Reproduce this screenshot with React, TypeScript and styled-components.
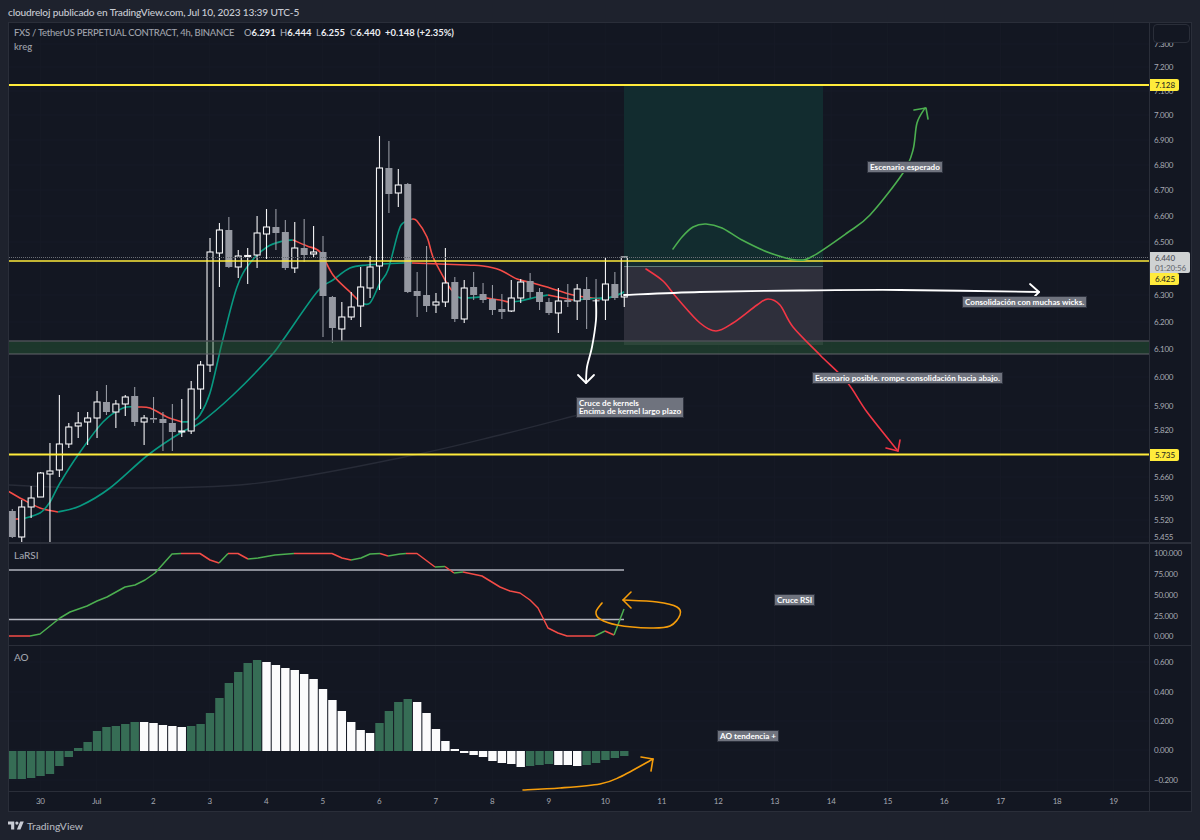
import React from "react";
import styled, { createGlobalStyle } from "styled-components";

const FONT = `"Lato", "Noto Sans", "Liberation Sans", sans-serif`;
const BG = "#131722";

const Global = createGlobalStyle`
  html, body { margin: 0; padding: 0; background: #1e222d; }
  body { font-family: ${FONT}; }
`;

const Page = styled.div`
  width: 1200px;
  height: 840px;
  display: flex;
  flex-direction: column;
  background: #1e222d;
  overflow: hidden;
`;
const Header = styled.header`
  height: 22px;
  flex: none;
  display: flex;
  align-items: center;
  padding: 2px 8px 0;
  box-sizing: border-box;
  font-size: 10.1px;
  font-weight: 500;
  letter-spacing: -0.15px;
  color: #c9ccd4;
  white-space: nowrap;
`;
const Frame = styled.main`
  flex: none;
  margin: 0 8px;
  height: 790px;
  box-sizing: border-box;
  border: 1px solid #2a2e39;
  background: ${BG};
  display: flex;
  flex-direction: column;
`;
const Pane = styled.section<{ $h: number; $sep?: number }>`
  flex: none;
  height: ${(p) => p.$h}px;
  box-sizing: border-box;
  border-bottom: ${(p) => p.$sep ?? 0}px solid #2a2e39;
  display: grid;
  grid-template-columns: 1140px 42px;
`;
const Plot = styled.div`
  position: relative;
  overflow: hidden;
  height: 100%;
`;
const Axis = styled.div`
  position: relative;
  overflow: hidden;
  height: 100%;
  border-left: 1px solid #2a2e39;
  box-sizing: border-box;
`;
const Drawing = styled.svg`
  display: block;
  width: 100%;
  height: 100%;
`;
const AxisText = styled.text`
  font-family: ${FONT};
  font-size: 8px;
  fill: #a6a9b2;
  letter-spacing: -0.25px;
  dominant-baseline: central;
`;
const TimeText = styled(AxisText)`
  text-anchor: middle;
`;
const Legend = styled.div`
  position: absolute;
  left: 5px;
  top: 3px;
  color: #a0a3ac;
  font-size: 9.45px;
  font-weight: 500;
  line-height: 14px;
  white-space: nowrap;
`;
const LegendRow = styled.div`
  display: flex;
  align-items: center;
`;
const Title = styled.span`
  width: 230px;
  letter-spacing: -0.25px;
`;
const Quote = styled.span<{ $w: number }>`
  width: ${(p) => p.$w}px;
  b { color: #eceef2; font-weight: 700; }
`;
const Change = styled.span`
  color: #eceef2;
  font-weight: 700;
`;
const PaneTitle = styled.div`
  position: absolute;
  left: 5px;
  top: 4px;
  color: #a0a3ac;
  font-size: 10px;
  font-weight: 500;
  line-height: 14px;
`;
const Note = styled.div<{ $x: number; $y: number }>`
  position: absolute;
  left: ${(p) => p.$x}px;
  top: ${(p) => p.$y}px;
  background: #6f737e;
  border: 1px solid #2e323e;
  box-sizing: border-box;
  color: #fff;
  font-size: 8.1px;
  font-weight: 700;
  line-height: 8.4px;
  padding: 1px 2px;
  white-space: pre;
`;
const PriceTag = styled.div<{ $y: number; $h?: number; $w?: number; $grey?: boolean }>`
  position: absolute;
  left: 0;
  top: ${(p) => p.$y}px;
  width: ${(p) => p.$w ?? 29}px;
  height: ${(p) => p.$h ?? 12}px;
  background: ${(p) => (p.$grey ? "#cfd2d3" : "#ffeb3b")};
  color: ${(p) => (p.$grey ? "#4d5059" : "#2a2c22")};
  font-size: 8px;
  font-weight: 500;
  letter-spacing: -0.1px;
  line-height: 10px;
  padding: 1px 0 0 5px;
  box-sizing: border-box;
  border-radius: 0 2px 2px 0;
  small { display: block; font-size: 8px; color: #6a6d75; }
`;
const ScaleButton = styled.div`
  position: absolute;
  left: 3px;
  top: 1px;
  width: 37px;
  height: 19px;
  border: 1px solid #2a2e39;
  border-radius: 4px;
  background: ${BG};
  box-sizing: border-box;
`;
const Footer = styled.footer`
  flex: none;
  height: 28px;
  display: flex;
  align-items: center;
  gap: 3px;
  padding: 0 8px 1px;
  box-sizing: border-box;
  color: #b2b5be;
  font-size: 10.3px;
  font-weight: 500;
`;

type C = [number, number, number, number, number];
const candles: C[] = [
  [509, 538, 511, 537, 0], [500, 543, 507, 537, 1], [486, 518, 498, 507, 1], [472, 497, 473, 497, 1],
  [443, 545, 471, 474, 1], [395, 477, 444, 470, 1], [423, 448, 427, 444, 1], [412, 438, 423, 426, 1],
  [412, 445, 418, 422, 1], [391, 438, 402, 418, 1], [385, 415, 402, 412, 0], [400, 428, 404, 412, 1],
  [395, 416, 397, 404, 1], [387, 426, 396, 422, 0], [415, 445, 418, 422, 1], [397, 423, 418, 419.5, 0],
  [412, 451, 419, 423, 0], [404, 451, 423, 432, 0], [399, 437, 431, 431.5, 1], [381, 434, 389, 431, 1],
  [361, 409, 365, 389, 1], [238, 372, 252, 365, 1], [223, 287, 230, 253, 1], [217, 268, 230, 267, 0],
  [250, 278, 256, 267, 1], [248, 284, 255.5, 256, 1], [216, 268, 233, 255, 1], [209, 259, 227, 234, 1],
  [209, 250, 227, 233, 0], [220, 270, 232, 268, 0], [222, 273, 248, 268, 1], [219, 262, 248, 255, 0],
  [226, 257, 252, 254, 1], [236, 337, 252, 296, 0], [296, 343, 297, 328, 0], [302, 341, 317, 329, 1],
  [292, 320, 307, 317, 1], [267, 327, 287, 306, 1], [256, 298, 267, 288, 1], [136, 290, 168, 266, 1],
  [141, 213, 168, 194, 0], [169, 207, 185, 193, 1], [183, 293, 184, 292, 0], [272, 317, 291, 296, 0],
  [246, 312, 295, 306, 0], [293, 313, 302, 305, 1], [248, 307, 283, 302, 1], [277, 322, 282, 319, 0],
  [280, 323, 288, 319, 1], [272, 300, 287, 295, 0], [283, 303, 294, 300, 0], [285, 315, 299, 310, 0],
  [294, 319, 309, 312, 0], [280, 312, 298, 311, 1], [279, 303, 282, 298, 1], [273, 298, 281, 292, 0],
  [288, 310, 292, 302, 0], [298, 315, 302, 313, 0], [288, 333, 301, 313, 1], [284, 307, 300, 302, 0],
  [284, 320, 289, 301, 1], [277, 329, 289, 300, 0], [279, 320, 300, 301.5, 0], [257, 320, 284, 300, 1],
  [272, 300, 284, 298, 0], [257, 307, 257, 297, 1],
];
const cx = (i: number) => 12.3 + 9.415 * i;

type P = [number, number];
const smooth = (pts: P[]) => {
  let d = `M${pts[0][0]} ${pts[0][1]}`;
  for (let i = 0; i < pts.length - 1; i++) {
    const a = pts[i - 1] ?? pts[i], b = pts[i], c = pts[i + 1], e = pts[i + 2] ?? c;
    d += `C${(b[0] + (c[0] - a[0]) / 6).toFixed(1)} ${(b[1] + (c[1] - a[1]) / 6).toFixed(1)} ${(c[0] - (e[0] - b[0]) / 6).toFixed(1)} ${(c[1] - (e[1] - b[1]) / 6).toFixed(1)} ${c[0]} ${c[1]}`;
  }
  return d;
};
const line = (pts: P[]) => pts.map((p) => p.join(",")).join(" ");

const TEAL = "#089981";
const RED = "#f44c47";
const GRN = "#4caf50";
const slow: [string, P[]][] = [
  [RED, [[8, 491], [22, 499], [40, 508], [58, 512]]],
  [TEAL, [[58, 512], [80, 506], [110, 488], [148, 455], [182, 432], [200, 423], [233, 395], [270, 357], [283, 340], [317, 292], [333, 280], [350, 268], [367, 265], [403, 263], [412, 263]]],
  [RED, [[412, 263], [467, 265], [483, 266], [500, 270], [517, 279], [533, 283], [550, 288], [573, 295], [600, 299]]],
  [TEAL, [[600, 299], [612, 297], [624, 292]]],
];
const fast: [string, P[]][] = [
  [RED, [[14, 519], [22, 519]]],
  [TEAL, [[22, 519], [40, 513], [50, 502], [60, 483], [78, 455], [103, 422], [123, 408], [137, 407]]],
  [RED, [[137, 407], [150, 408], [167, 417], [182, 422]]],
  [TEAL, [[182, 422], [192, 421], [200, 415], [210, 393], [222, 343], [237, 287], [250, 263], [267, 247], [283, 241], [293, 240]]],
  [RED, [[293, 240], [307, 246], [320, 252], [333, 275], [350, 292], [361, 303]]],
  [TEAL, [[361, 303], [370, 303], [380, 283], [388, 270], [398, 233], [403, 223], [412, 219]]],
  [RED, [[412, 219], [417, 221], [427, 237], [433, 257], [445, 280], [450, 288], [458, 297]]],
  [TEAL, [[458, 297], [463, 298], [480, 297]]],
  [RED, [[480, 297], [500, 300], [508, 302]]],
  [TEAL, [[508, 302], [520, 301], [537, 297], [548, 295]]],
  [RED, [[548, 295], [573, 300]]],
  [TEAL, [[573, 300], [600, 298], [612, 297], [624, 292]]],
];
const rsi: [string, P[]][] = [
  [RED, [[9, 636], [30, 636]]],
  [GRN, [[30, 636], [40, 634], [60, 618], [70, 612], [87, 606], [97, 601], [107, 597], [125, 587], [135, 585], [145, 580], [155, 573], [172, 554], [181, 553.5]]],
  [RED, [[181, 553.5], [200, 553.5], [210, 560], [219, 563]]],
  [GRN, [[219, 563], [228, 553.5]]],
  [RED, [[228, 553.5], [238, 553.5], [248, 559]]],
  [GRN, [[248, 559], [258, 558], [275, 555], [294, 553.5]]],
  [RED, [[294, 553.5], [332, 553.5], [342, 558], [351, 560]]],
  [GRN, [[351, 560], [361, 558], [370, 554], [380, 553.5]]],
  [RED, [[380, 553.5], [388, 556]]],
  [GRN, [[388, 556], [400, 554], [406, 553.5]]],
  [RED, [[406, 553.5], [417, 553.5], [435, 567]]],
  [GRN, [[435, 567], [445, 566.5]]],
  [RED, [[445, 566.5], [454, 573]]],
  [GRN, [[454, 573], [463, 572]]],
  [RED, [[463, 572], [482, 576], [500, 587], [510, 591], [520, 593], [530, 600], [538, 608], [548, 628], [558, 633], [567, 636], [595, 636]]],
  [GRN, [[595, 636], [605, 631]]],
  [RED, [[605, 631], [614, 635]]],
  [GRN, [[614, 635], [624, 609]]],
];

const ao = [779, 779, 778, 776, 774, 766, 757, 748, 742, 731, 727, 726, 724, 722, 722, 723, 725, 726, 727, 726, 724, 713, 698, 683, 672, 663, 660, 662, 665, 668, 670, 674, 679, 689, 700, 711, 722, 730, 733, 723, 711, 702, 699, 702, 713, 729, 741, 749, 753, 755, 757, 761, 763, 764, 767, 766, 765, 764, 765, 765, 766, 765, 763, 760, 758, 756];
const isWhite = (i: number) => (i >= 14 && i <= 18) || (i >= 27 && i <= 38) || (i >= 43 && i <= 54) || (i >= 58 && i <= 60);

const priceTicks: [string, number][] = [["7.300", 44], ["7.200", 67], ["7.100", 91], ["7.000", 115], ["6.900", 140], ["6.800", 165], ["6.700", 190], ["6.600", 216], ["6.500", 242], ["6.300", 295], ["6.200", 322], ["6.100", 349], ["6.000", 377], ["5.900", 406], ["5.820", 430], ["5.660", 477], ["5.590", 498], ["5.520", 520], ["5.455", 537]];
const rsiTicks: [string, number][] = [["100.000", 553], ["75.000", 574], ["50.000", 595], ["25.000", 616], ["0.000", 636]];
const aoTicks: [string, number][] = [["0.600", 662], ["0.400", 692], ["0.200", 721], ["0.000", 750], ["−0.200", 780]];
const days = ["30", "Jul", "2", "3", "4", "5", "6", "7", "8", "9", "10", "11", "12", "13", "14", "15", "16", "17", "18", "19"];
const dayX = (i: number) => 40.3 + 56.49 * i;

const Segs = ({ segs, w }: { segs: [string, P[]][]; w: number }) => (
  <>
    {segs.map(([c, pts], i) => (
      <path key={i} d={smooth(pts)} fill="none" stroke={c} strokeWidth={w} strokeLinejoin="round" />
    ))}
  </>
);
const Hand = ({ pts, head, c, w = 1.6 }: { pts: P[]; head: P[]; c: string; w?: number }) => (
  <g fill="none" stroke={c} strokeWidth={w} strokeLinecap="round" strokeLinejoin="round">
    <path d={smooth(pts)} />
    <polyline points={line(head)} />
  </g>
);
const Ticks = ({ items, y, h }: { items: [string, number][]; y: number; h: number }) => (
  <Drawing viewBox={`1150 ${y} 41 ${h}`}>
    {items.map(([t, v]) => (
      <AxisText key={t} x={1154} y={v}>{t}</AxisText>
    ))}
  </Drawing>
);
const VGrid = ({ y1, y2 }: { y1: number; y2: number }) => (
  <g stroke="#171b26" strokeWidth="1">
    {days.map((_, i) => (
      <line key={i} x1={dayX(i)} x2={dayX(i)} y1={y1} y2={y2} />
    ))}
  </g>
);
const HGrid = ({ ys }: { ys: number[] }) => (
  <g stroke="#171b26" strokeWidth="1">
    {ys.map((y) => (
      <line key={y} x1={9} x2={1149} y1={y} y2={y} />
    ))}
  </g>
);

const GOLD = "#ffeb3b";
const ORANGE = "#f59d0b";

export default function App() {
  return (
    <Page>
      <Global />
      <Header>cloudreloj publicado en TradingView.com, Jul 10, 2023 13:39 UTC-5</Header>
      <Frame>
        <Pane $h={521} $sep={2}>
          <Plot>
            <Drawing viewBox="9 23 1140 519">
              <VGrid y1={23} y2={542} />
              <HGrid ys={priceTicks.map((t) => t[1])} />
              <rect x={624} y={86} width={199} height={180} fill="#122c2f" />
              <rect x={624} y={266} width={199} height={79} fill="#2e2f3b" />
              <line x1={624} x2={823} y1={266.5} y2={266.5} stroke="#5f7a77" />
              <path d={smooth([[8, 485], [100, 488], [250, 484], [400, 458], [500, 435], [578, 415]])} fill="none" stroke="#272b37" strokeWidth="1.4" />
              <Segs segs={slow} w={1.6} />
              <Segs segs={fast} w={1.6} />
              {candles.map(([wt, wb, bt, bb, up], i) => {
                const x = cx(i);
                const col = up ? "#f4f4f6" : "#9598a1";
                return (
                  <g key={i}>
                    <line x1={x} x2={x} y1={wt} y2={bt} stroke={col} strokeWidth="1.1" />
                    <line x1={x} x2={x} y1={bb} y2={wb} stroke={col} strokeWidth="1.1" />
                    {up ? (
                      <rect x={x - 3} y={bt} width={6} height={Math.max(bb - bt, 1)} fill={i === 65 ? "none" : BG} stroke={col} strokeWidth="1.1" />
                    ) : (
                      <rect x={x - 3.5} y={bt} width={7} height={Math.max(bb - bt, 1.5)} fill={col} />
                    )}
                  </g>
                );
              })}
              <rect x={9} y={341} width={1140} height={13} fill="#2e6b3a" opacity="0.38" />
              <line x1={9} x2={1149} y1={341} y2={341} stroke="#4b4f56" strokeWidth="1.6" />
              <line x1={9} x2={1149} y1={354} y2={354} stroke="#62656b" strokeWidth="1" />
              <line x1={9} x2={1149} y1={257.5} y2={257.5} stroke="#6a6d75" strokeWidth="1" strokeDasharray="1 1" />
              <line x1={9} x2={1149} y1={85} y2={85} stroke={GOLD} strokeWidth="2" />
              <line x1={9} x2={1149} y1={261} y2={261} stroke={GOLD} strokeWidth="1.6" />
              <line x1={9} x2={1149} y1={454.5} y2={454.5} stroke={GOLD} strokeWidth="2" />
              <Hand
                c="#4caf50"
                pts={[[673, 249], [682, 237], [693, 227], [706, 224], [722, 228], [742, 240], [770, 253], [797, 260], [813, 256], [847, 233], [870, 215], [903, 173], [913, 150], [917, 123], [925, 108]]}
                head={[[914, 110], [926, 108], [928, 119]]}
              />
              <Hand
                c="#f23645"
                pts={[[646, 269], [663, 281], [677, 298], [700, 323], [716, 331], [733, 323], [757, 305], [768, 299], [780, 305], [793, 327], [820, 355], [847, 382], [867, 412], [898, 451]]}
                head={[[886, 448], [898, 451], [900, 440]]}
              />
              <Hand
                c="#ffffff"
                w={1.8}
                pts={[[624, 295], [700, 292], [800, 290.5], [900, 290], [1039, 292]]}
                head={[[1030, 284], [1039, 292], [1035, 296]]}
              />
              <Hand
                c="#ffffff"
                w={1.8}
                pts={[[596, 300], [596, 320], [592, 347], [587, 367], [586, 383]]}
                head={[[578, 375], [586, 383], [594, 375]]}
              />
            </Drawing>
            <Legend>
              <LegendRow>
                <Title>FXS / TetherUS PERPETUAL CONTRACT, 4h, BINANCE</Title>
                <Quote $w={36}>O<b>6.291</b></Quote>
                <Quote $w={36}>H<b>6.444</b></Quote>
                <Quote $w={34}>L<b>6.255</b></Quote>
                <Quote $w={35}>C<b>6.440</b></Quote>
                <Change>+0.148 (+2.35%)</Change>
              </LegendRow>
              <LegendRow>kreg</LegendRow>
            </Legend>
            <Note $x={858} $y={138}>Escenario esperado</Note>
            <Note $x={953} $y={273}>Consolidación con muchas wicks.</Note>
            <Note $x={803} $y={349}>Escenario posible. rompe consolidación hacia abajo.</Note>
            <Note $x={567} $y={374}>{"Cruce de kernels\nEncima de kernel largo plazo"}</Note>
          </Plot>
          <Axis>
            <Ticks items={priceTicks} y={23} h={519} />
            <ScaleButton />
            <PriceTag $y={56}>7.128</PriceTag>
            <PriceTag $y={229} $h={21} $w={40} $grey>6.440<small>01:20:56</small></PriceTag>
            <PriceTag $y={250}>6.425</PriceTag>
            <PriceTag $y={426}>5.735</PriceTag>
          </Axis>
        </Pane>
        <Pane $h={102} $sep={1}>
          <Plot>
            <Drawing viewBox="9 544 1140 101">
              <VGrid y1={544} y2={645} />
              <line x1={9} x2={624} y1={570} y2={570} stroke="#b2b5be" strokeWidth="1.3" />
              <line x1={9} x2={624} y1={619.5} y2={619.5} stroke="#b2b5be" strokeWidth="1.3" />
              {rsi.map(([c, pts], i) => (
                <polyline key={i} points={line(pts)} fill="none" stroke={c} strokeWidth="1.5" strokeLinejoin="round" />
              ))}
              <Hand
                c={ORANGE}
                pts={[[602, 603], [596, 612], [600, 619], [617, 625], [650, 628], [670, 626], [680, 615], [677, 607], [657, 602], [623, 600]]}
                head={[[631, 592], [623, 600], [631, 608]]}
              />
            </Drawing>
            <PaneTitle>LaRSI</PaneTitle>
            <Note $x={765} $y={50}>Cruce RSI</Note>
          </Plot>
          <Axis>
            <Ticks items={rsiTicks} y={544} h={101} />
          </Axis>
        </Pane>
        <Pane $h={146} $sep={1}>
          <Plot>
            <Drawing viewBox="9 646 1140 145">
              <VGrid y1={646} y2={791} />
              <HGrid ys={aoTicks.map((t) => t[1])} />
              {ao.map((y, i) => (
                <rect
                  key={i}
                  x={cx(i) - 4.2}
                  y={Math.min(y, 751)}
                  width={8.4}
                  height={Math.max(Math.abs(y - 751), 1)}
                  fill={isWhite(i) ? "#fbfbfc" : "#366d55"}
                />
              ))}
              <Hand
                c={ORANGE}
                pts={[[523, 790], [560, 788], [600, 784], [620, 777], [653, 759]]}
                head={[[641, 757], [653, 759], [651, 771]]}
              />
            </Drawing>
            <PaneTitle>AO</PaneTitle>
            <Note $x={708} $y={84}>AO tendencia +</Note>
          </Plot>
          <Axis>
            <Ticks items={aoTicks} y={646} h={145} />
          </Axis>
        </Pane>
        <Pane $h={19}>
          <Plot>
            <Drawing viewBox="9 792 1140 19">
              {days.map((d, i) => (
                <TimeText key={d} x={dayX(i)} y={801}>{d}</TimeText>
              ))}
            </Drawing>
          </Plot>
          <Axis />
        </Pane>
      </Frame>
      <Footer>
        <svg width="16" height="9" viewBox="0 4 36 18" aria-hidden="true">
          <path fill="#c9ccd4" d="M14 22H7V11H0V4h14v18zM28 22h-8l7.5-18h8L28 22z" />
          <circle fill="#c9ccd4" cx="20" cy="7.5" r="3.6" />
        </svg>
        <span>TradingView</span>
      </Footer>
    </Page>
  );
}
